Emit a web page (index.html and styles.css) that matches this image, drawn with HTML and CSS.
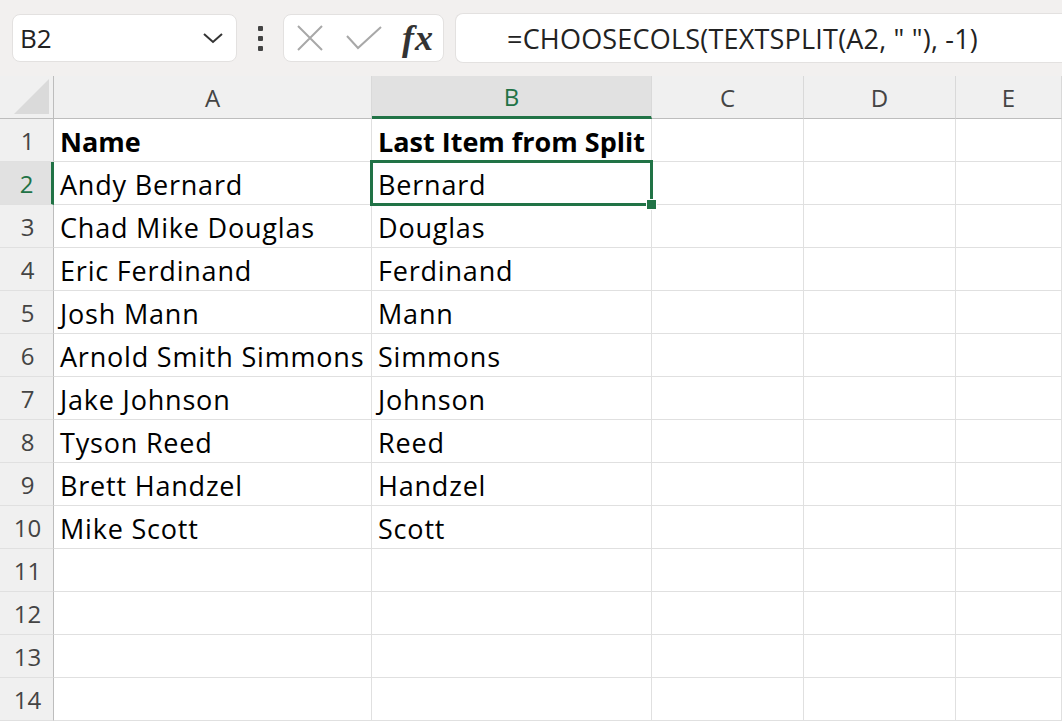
FILE: index.html
```html
<!DOCTYPE html>
<html lang="en">
<head>
    <meta charset="UTF-8">
    <title>Sheet</title>
    <link rel="stylesheet" href="styles.css">
</head>
<body>
    <div class="toolbar">
        <div class="name-box">
            <span>B2</span>
            <svg class="chevron" width="22" height="14" viewBox="0 0 22 14"><path d="M2 3 L11 11 L20 3" fill="none" stroke="#333" stroke-width="2"/></svg>
        </div>
        <div class="dots"><i></i><i></i><i></i></div>
        <div class="fx-box">
            <svg width="26" height="26" viewBox="0 0 26 26"><path d="M1 1 L25 25 M25 1 L1 25" stroke="#a8a8a8" stroke-width="2" fill="none"/></svg>
            <svg width="38" height="26" viewBox="0 0 38 26"><path d="M2 11 L13 23 L36 2" stroke="#a8a8a8" stroke-width="2" fill="none"/></svg>
            <span class="fx"><i>f</i><i>x</i></span>
        </div>
        <div class="formula">=CHOOSECOLS(TEXTSPLIT(A2, " "), -1)</div>
    </div>

    <div class="sheet">
        <div class="corner"></div>
        <div class="col-head">A</div>
        <div class="col-head active">B</div>
        <div class="col-head">C</div>
        <div class="col-head">D</div>
        <div class="col-head">E</div>

        <div class="row-head">1</div><div class="cell bold">Name</div><div class="cell bold">Last Item from Split</div><div class="cell"></div><div class="cell"></div><div class="cell"></div>
        <div class="row-head active">2</div><div class="cell">Andy Bernard</div><div class="cell selected">Bernard<span class="handle"></span></div><div class="cell"></div><div class="cell"></div><div class="cell"></div>
        <div class="row-head">3</div><div class="cell">Chad Mike Douglas</div><div class="cell">Douglas</div><div class="cell"></div><div class="cell"></div><div class="cell"></div>
        <div class="row-head">4</div><div class="cell">Eric Ferdinand</div><div class="cell">Ferdinand</div><div class="cell"></div><div class="cell"></div><div class="cell"></div>
        <div class="row-head">5</div><div class="cell">Josh Mann</div><div class="cell">Mann</div><div class="cell"></div><div class="cell"></div><div class="cell"></div>
        <div class="row-head">6</div><div class="cell">Arnold Smith Simmons</div><div class="cell">Simmons</div><div class="cell"></div><div class="cell"></div><div class="cell"></div>
        <div class="row-head">7</div><div class="cell">Jake Johnson</div><div class="cell">Johnson</div><div class="cell"></div><div class="cell"></div><div class="cell"></div>
        <div class="row-head">8</div><div class="cell">Tyson Reed</div><div class="cell">Reed</div><div class="cell"></div><div class="cell"></div><div class="cell"></div>
        <div class="row-head">9</div><div class="cell">Brett Handzel</div><div class="cell">Handzel</div><div class="cell"></div><div class="cell"></div><div class="cell"></div>
        <div class="row-head">10</div><div class="cell">Mike Scott</div><div class="cell">Scott</div><div class="cell"></div><div class="cell"></div><div class="cell"></div>
        <div class="row-head">11</div><div class="cell"></div><div class="cell"></div><div class="cell"></div><div class="cell"></div><div class="cell"></div>
        <div class="row-head">12</div><div class="cell"></div><div class="cell"></div><div class="cell"></div><div class="cell"></div><div class="cell"></div>
        <div class="row-head">13</div><div class="cell"></div><div class="cell"></div><div class="cell"></div><div class="cell"></div><div class="cell"></div>
        <div class="row-head">14</div><div class="cell"></div><div class="cell"></div><div class="cell"></div><div class="cell"></div><div class="cell"></div>
    </div>
</body>
</html>
```

FILE: styles.css
```css
body {
    margin: 0;
    font-family: "Open Sans", "Noto Sans", sans-serif;
    background-color: #fff;
    overflow: hidden;
}
.toolbar {
    display: flex;
    align-items: center;
    height: 76px;
    padding: 0 0 0 12px;
    background-color: #f2f0ef;
    box-sizing: border-box;
}
.name-box {
    display: flex;
    align-items: center;
    justify-content: space-between;
    width: 225px;
    height: 48px;
    padding: 0 12px 0 7px;
    box-sizing: border-box;
    background-color: white;
    border: 1px solid #e3e1e0;
    border-radius: 8px;
    font-size: 26px;
    color: #222;
}
.dots {
    display: flex;
    flex-direction: column;
    gap: 5px;
    width: 46px;
    align-items: center;
}
.dots i {
    width: 5px;
    height: 5px;
    background-color: #444;
    border-radius: 1px;
}
.fx-box {
    display: flex;
    align-items: center;
    gap: 22px;
    width: 161px;
    height: 48px;
    padding: 0 8px 0 13px;
    box-sizing: border-box;
    background-color: white;
    border: 1px solid #e3e1e0;
    border-radius: 8px;
}
.fx {
    font-family: "Liberation Serif", serif;
    font-size: 36px;
    font-weight: bold;
    color: #333;
    line-height: 1;
    margin-left: -3px;
}
.fx i:last-child {
    margin-left: 1px;
}
.formula {
    flex: 1;
    height: 48px;
    margin-left: 11px;
    padding-left: 51px;
    display: flex;
    align-items: center;
    background-color: white;
    border: 1px solid #e3e1e0;
    border-right: none;
    border-radius: 8px 0 0 8px;
    font-size: 27px;
    color: #222;
    letter-spacing: 0.2px;
}
.sheet {
    display: grid;
    grid-template-columns: 54px 318px 280px 152px 152px 1fr;
    grid-auto-rows: 43px;
    grid-template-rows: 43px;
}
.corner {
    background-color: #f0f0f0;
    border-right: 1px solid #bdbdbd;
    border-bottom: 1px solid #bdbdbd;
    position: relative;
}
.corner::after {
    content: "";
    position: absolute;
    right: 4px;
    bottom: 4px;
    border-left: 35px solid transparent;
    border-bottom: 35px solid #dadada;
}
.col-head {
    background-color: #f0f0f0;
    border-right: 1px solid #d9d9d9;
    border-bottom: 1px solid #bdbdbd;
    display: flex;
    align-items: center;
    justify-content: center;
    font-size: 24px;
    color: #444;
}
.col-head.active {
    background-color: #e1e1e1;
    color: #217346;
    border-bottom: 3px solid #217346;
}
.row-head {
    background-color: #f0f0f0;
    border-right: 1px solid #bdbdbd;
    border-bottom: 1px solid #e0e0e0;
    display: flex;
    align-items: center;
    justify-content: center;
    font-size: 24px;
    color: #444;
    padding-left: 2px;
}
.row-head.active {
    background-color: #e1e1e1;
    color: #217346;
    border-right: 3px solid #217346;
}
.cell {
    border-right: 1px solid #e0e0e0;
    border-bottom: 1px solid #e0e0e0;
    display: flex;
    align-items: center;
    padding: 2px 0 0 6px;
    font-size: 27px;
    letter-spacing: 0.8px;
    color: #000;
    white-space: nowrap;
    position: relative;
}
.bold {
    font-weight: bold;
    letter-spacing: 0;
}
.selected {
    z-index: 2;
}
.selected::before {
    content: "";
    position: absolute;
    left: -2px;
    top: -2px;
    right: -2px;
    bottom: -2px;
    border: 3px solid #217346;
}
.handle {
    position: absolute;
    right: -6px;
    bottom: -6px;
    width: 9px;
    height: 9px;
    background-color: #217346;
    border: 1px solid white;
}
```
